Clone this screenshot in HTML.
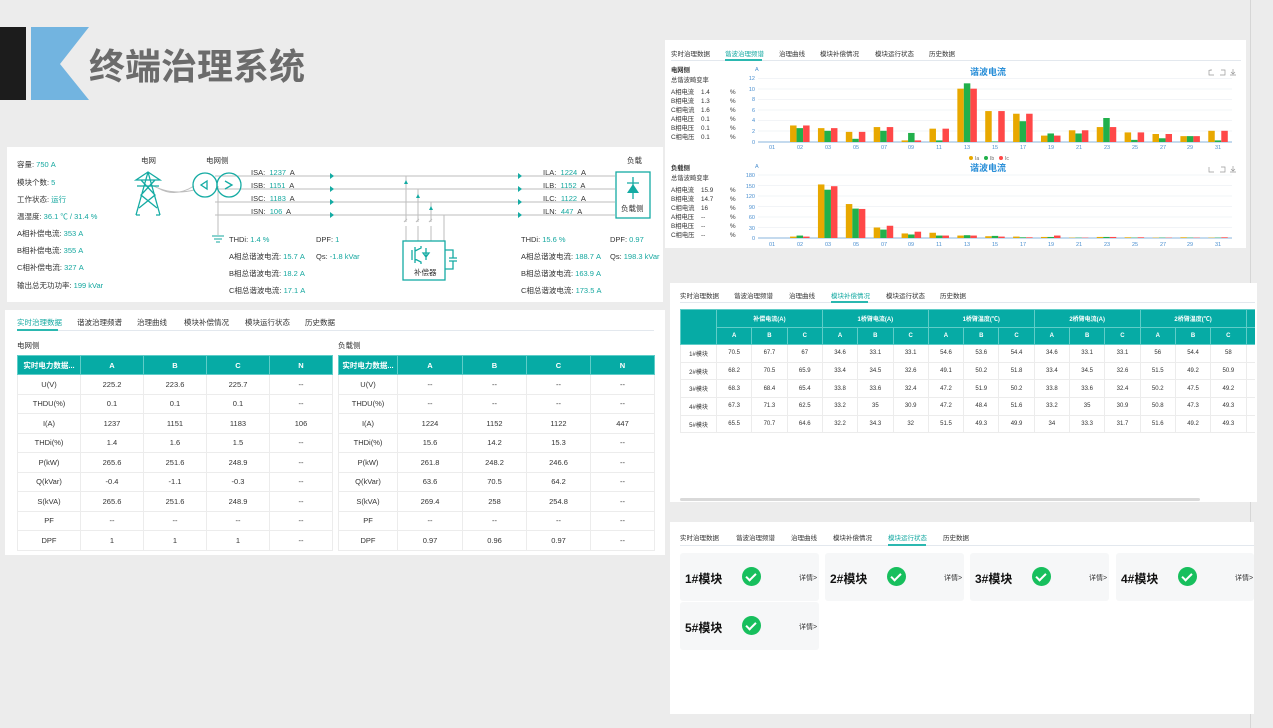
<!DOCTYPE html>
<html><head><meta charset="utf-8">
<style>
*{margin:0;padding:0;box-sizing:border-box}
body{width:1273px;height:728px;background:#ececec;position:relative;overflow:hidden;font-family:"Liberation Sans","Noto Sans CJK SC",sans-serif;color:#333}
.a{position:absolute}
.p{position:absolute;background:#fff}
.t{position:absolute;font-size:7.5px;white-space:nowrap;line-height:1}
.v{color:#14a79f}
.tab{position:absolute;font-size:7.5px;white-space:nowrap;color:#333}
.tab.on{color:#14a9a2}
table{border-collapse:collapse;position:absolute;table-layout:fixed;font-size:7.5px}
td,th{text-align:center;border:1px solid #ececec;overflow:hidden;white-space:nowrap;color:#333;font-weight:normal}
th{background:#06aba5;color:#fff;font-weight:bold;border-color:#5fcdc8}
.card{position:absolute;background:#f6f7f8;border-radius:3px;width:139px;height:48px}
.card b{position:absolute;left:5px;top:17px;font-size:12px;color:#111;font-family:"Liberation Sans","Noto Sans CJK SC",sans-serif}
.card i{position:absolute;left:62px;top:14px;width:19px;height:19px;border-radius:50%;background:#17bf5d}
.card i:after{content:"";position:absolute;left:6px;top:4px;width:4px;height:8px;border:solid #fff;border-width:0 2px 2px 0;transform:rotate(45deg)}
.card span{position:absolute;left:119px;top:20px;font-size:7px;color:#333}
</style></head><body>
<div class="a" style="left:1250px;top:0;width:23px;height:728px;background:#ececec;border-left:1px solid #d6d6d6"></div>
<!-- title -->
<div class="a" style="left:0;top:27px;width:26px;height:73px;background:#1c1c1c"></div>
<svg class="a" style="left:31px;top:27px" width="58" height="73"><polygon points="0,0 58,0 29,37 58,73 0,73" fill="#72b4e0"/></svg>
<div class="a" style="left:89px;top:42px;font-size:36px;font-weight:bold;color:#6b6b6b;letter-spacing:0px;font-family:'Noto Sans CJK SC',sans-serif;line-height:44px">终端治理系统</div>

<!-- panel 1 diagram -->
<div class="p" style="left:7px;top:147px;width:656px;height:155px"></div>
<div class="t" style="left:17px;top:161px">容量: <span class="v">750 A</span></div>
<div class="t" style="left:17px;top:179px">模块个数: <span class="v">5</span></div>
<div class="t" style="left:17px;top:196px">工作状态: <span class="v">运行</span></div>
<div class="t" style="left:17px;top:213px">温湿度: <span class="v">36.1 ℃ / 31.4 %</span></div>
<div class="t" style="left:17px;top:230px">A相补偿电流: <span class="v">353 A</span></div>
<div class="t" style="left:17px;top:247px">B相补偿电流: <span class="v">355 A</span></div>
<div class="t" style="left:17px;top:264px">C相补偿电流: <span class="v">327 A</span></div>
<div class="t" style="left:17px;top:282px">输出总无功功率: <span class="v">199 kVar</span></div>

<div class="t" style="left:141px;top:157px">电网</div>
<div class="t" style="left:206px;top:157px">电网侧</div>
<div class="t" style="left:627px;top:157px">负载</div>
<div class="t" style="left:251px;top:169px">ISA: <span class="v">&nbsp;1237</span>&nbsp; A</div>
<div class="t" style="left:251px;top:182px">ISB: <span class="v">&nbsp;1151</span>&nbsp; A</div>
<div class="t" style="left:251px;top:195px">ISC: <span class="v">&nbsp;1183</span>&nbsp; A</div>
<div class="t" style="left:251px;top:208px">ISN: <span class="v">&nbsp;106</span>&nbsp; A</div>
<div class="t" style="left:543px;top:169px">ILA: <span class="v">&nbsp;1224</span>&nbsp; A</div>
<div class="t" style="left:543px;top:182px">ILB: <span class="v">&nbsp;1152</span>&nbsp; A</div>
<div class="t" style="left:543px;top:195px">ILC: <span class="v">&nbsp;1122</span>&nbsp; A</div>
<div class="t" style="left:543px;top:208px">ILN: <span class="v">&nbsp;447</span>&nbsp; A</div>
<div class="t" style="left:229px;top:236px">THDi: <span class="v">1.4 %</span></div>
<div class="t" style="left:316px;top:236px">DPF: <span class="v">1</span></div>
<div class="t" style="left:229px;top:253px">A相总谐波电流: <span class="v">15.7 A</span></div>
<div class="t" style="left:316px;top:253px">Qs: <span class="v">-1.8 kVar</span></div>
<div class="t" style="left:229px;top:270px">B相总谐波电流: <span class="v">18.2 A</span></div>
<div class="t" style="left:229px;top:287px">C相总谐波电流: <span class="v">17.1 A</span></div>
<div class="t" style="left:521px;top:236px">THDi: <span class="v">15.6 %</span></div>
<div class="t" style="left:610px;top:236px">DPF: <span class="v">0.97</span></div>
<div class="t" style="left:521px;top:253px">A相总谐波电流: <span class="v">188.7 A</span></div>
<div class="t" style="left:610px;top:253px">Qs: <span class="v">198.3 kVar</span></div>
<div class="t" style="left:521px;top:270px">B相总谐波电流: <span class="v">163.9 A</span></div>
<div class="t" style="left:521px;top:287px">C相总谐波电流: <span class="v">173.5 A</span></div>
<div class="t" style="left:414px;top:269px">补偿器</div>
<div class="t" style="left:621px;top:205px">负载侧</div>

<svg class="a" style="left:0;top:0" width="1273" height="728">
<g fill="none" stroke="#bdbdbd" stroke-width="1">
<path d="M215 176H615M215 189H615M215 202H615M215 215H615M218 186V235"/>
<path d="M158 188Q175 198 194 186M150 184Q170 196 194 190"/>
<path d="M406 176V222M418 189V222M431 202V222M444 215V241M406 226V241M418 226V241M431 226V241"/>
<path d="M404 222l3-3M416 222l3-3M429 222l3-3"/>
</g>
<g stroke="#bbb"><path d="M212 236h12M214 239h8M216 242h4" stroke="#14a79f"/></g>
<g fill="none" stroke="#14aba3" stroke-width="1.3">
<path d="M148 172L136 180H160ZM137 186H159M148 172L136 215M148 172L160 215M141 180L155 195L139 208M155 180L141 195L157 208M136 215H140M156 215H160"/>
<circle cx="205" cy="185" r="12"/><circle cx="229" cy="185" r="12"/>
<path d="M207 181L201 185L207 189ZM225 181L232 185L225 189"/>
<rect x="403" y="241" width="42" height="39"/>
<path d="M445 250h8v8M449 258h8M449 261h8M453 261v8h-8"/>
<path d="M412 250v10M415 247v16M415 251l6-3v-2M415 259l6 3v2M426 248v12M423 253h6l-3 4z"/>
<rect x="616" y="172" width="34" height="46"/>
<path d="M633 177v22M627 183h12"/>
</g>
<path d="M627 193h12l-6-9z" fill="#14aba3"/>
<g fill="#14aba3">
<path d="M330 173l4 3-4 3zM330 186l4 3-4 3zM330 199l4 3-4 3zM330 212l4 3-4 3zM518 173l4 3-4 3zM518 186l4 3-4 3zM518 199l4 3-4 3zM518 212l4 3-4 3z"/>
<path d="M404 184l2-4 2 4zM416 198l2-4 2 4zM429 210l2-4 2 4z"/>
</g>
</svg>

<!-- panel 2 -->
<div class="p" style="left:5px;top:310px;width:660px;height:245px"></div>
<div class="tab on" style="left:17px;top:317px">实时治理数据</div>
<div class="tab" style="left:77px;top:317px">谐波治理频谱</div>
<div class="tab" style="left:137px;top:317px">治理曲线</div>
<div class="tab" style="left:184px;top:317px">模块补偿情况</div>
<div class="tab" style="left:245px;top:317px">模块运行状态</div>
<div class="tab" style="left:305px;top:317px">历史数据</div>
<div class="a" style="left:17px;top:330px;width:637px;height:1px;background:#e3e8ee"></div>
<div class="a" style="left:17px;top:329px;width:41px;height:2px;background:#2bb8b0"></div>
<div class="t" style="left:17px;top:342px">电网侧</div>
<div class="t" style="left:338px;top:342px">负载侧</div>
<table style="left:17px;top:355px;width:315px">
<colgroup><col style="width:63px"><col style="width:63px"><col style="width:63px"><col style="width:63px"><col style="width:63px"></colgroup>
<tr style="height:19px"><th>实时电力数据...</th><th>A</th><th>B</th><th>C</th><th>N</th></tr>
<tr style="height:19.5px"><td>U(V)</td><td>225.2</td><td>223.6</td><td>225.7</td><td>--</td></tr>
<tr style="height:19.5px"><td>THDU(%)</td><td>0.1</td><td>0.1</td><td>0.1</td><td>--</td></tr>
<tr style="height:19.5px"><td>I(A)</td><td>1237</td><td>1151</td><td>1183</td><td>106</td></tr>
<tr style="height:19.5px"><td>THDi(%)</td><td>1.4</td><td>1.6</td><td>1.5</td><td>--</td></tr>
<tr style="height:19.5px"><td>P(kW)</td><td>265.6</td><td>251.6</td><td>248.9</td><td>--</td></tr>
<tr style="height:19.5px"><td>Q(kVar)</td><td>-0.4</td><td>-1.1</td><td>-0.3</td><td>--</td></tr>
<tr style="height:19.5px"><td>S(kVA)</td><td>265.6</td><td>251.6</td><td>248.9</td><td>--</td></tr>
<tr style="height:19.5px"><td>PF</td><td>--</td><td>--</td><td>--</td><td>--</td></tr>
<tr style="height:19.5px"><td>DPF</td><td>1</td><td>1</td><td>1</td><td>--</td></tr>
</table>
<table style="left:338px;top:355px;width:316px">
<colgroup><col style="width:59px"><col style="width:65px"><col style="width:64px"><col style="width:64px"><col style="width:64px"></colgroup>
<tr style="height:19px"><th>实时电力数据...</th><th>A</th><th>B</th><th>C</th><th>N</th></tr>
<tr style="height:19.5px"><td>U(V)</td><td>--</td><td>--</td><td>--</td><td>--</td></tr>
<tr style="height:19.5px"><td>THDU(%)</td><td>--</td><td>--</td><td>--</td><td>--</td></tr>
<tr style="height:19.5px"><td>I(A)</td><td>1224</td><td>1152</td><td>1122</td><td>447</td></tr>
<tr style="height:19.5px"><td>THDi(%)</td><td>15.6</td><td>14.2</td><td>15.3</td><td>--</td></tr>
<tr style="height:19.5px"><td>P(kW)</td><td>261.8</td><td>248.2</td><td>246.6</td><td>--</td></tr>
<tr style="height:19.5px"><td>Q(kVar)</td><td>63.6</td><td>70.5</td><td>64.2</td><td>--</td></tr>
<tr style="height:19.5px"><td>S(kVA)</td><td>269.4</td><td>258</td><td>254.8</td><td>--</td></tr>
<tr style="height:19.5px"><td>PF</td><td>--</td><td>--</td><td>--</td><td>--</td></tr>
<tr style="height:19.5px"><td>DPF</td><td>0.97</td><td>0.96</td><td>0.97</td><td>--</td></tr>
</table>

<!-- right panel 1 -->
<div class="p" style="left:665px;top:40px;width:581px;height:208px"></div>
<div class="tab" style="left:671px;top:48px;font-size:6.5px">实时治理数据</div>
<div class="tab on" style="left:725px;top:48px;font-size:6.5px">谐波治理频谱</div>
<div class="tab" style="left:779px;top:48px;font-size:6.5px">治理曲线</div>
<div class="tab" style="left:820px;top:48px;font-size:6.5px">模块补偿情况</div>
<div class="tab" style="left:875px;top:48px;font-size:6.5px">模块运行状态</div>
<div class="tab" style="left:929px;top:48px;font-size:6.5px">历史数据</div>
<div class="a" style="left:671px;top:60px;width:570px;height:1px;background:#e3e8ee"></div>
<div class="a" style="left:725px;top:59px;width:37px;height:2px;background:#2bb8b0"></div>

<div style="position:absolute;left:671px;top:66px;font-size:6.3px;line-height:9px;white-space:pre"><b>电网侧</b>
<span style="line-height:12px">总谐波畸变率</span></div>
<div style="position:absolute;left:671px;top:88px;font-size:6.3px;line-height:9px">A相电流<br>B相电流<br>C相电流<br>A相电压<br>B相电压<br>C相电压</div>
<div style="position:absolute;left:701px;top:88px;font-size:6.3px;line-height:9px">1.4<br>1.3<br>1.6<br>0.1<br>0.1<br>0.1</div>
<div style="position:absolute;left:730px;top:88px;font-size:6.3px;line-height:9px">%<br>%<br>%<br>%<br>%<br>%</div>
<div style="position:absolute;left:671px;top:164px;font-size:6.3px;line-height:9px;white-space:pre"><b>负载侧</b>
<span style="line-height:12px">总谐波畸变率</span></div>
<div style="position:absolute;left:671px;top:186px;font-size:6.3px;line-height:9px">A相电流<br>B相电流<br>C相电流<br>A相电压<br>B相电压<br>C相电压</div>
<div style="position:absolute;left:701px;top:186px;font-size:6.3px;line-height:9px">15.9<br>14.7<br>16<br>--<br>--<br>--</div>
<div style="position:absolute;left:730px;top:186px;font-size:6.3px;line-height:9px">%<br>%<br>%<br>%<br>%<br>%</div>

<svg class="a" style="left:0;top:0" width="1273" height="728" font-family="Liberation Sans, Noto Sans CJK SC, sans-serif">
<g stroke="#eef1f5" stroke-width="0.8">
<path d="M758 78.5H1232M758 89H1232M758 99.5H1232M758 110H1232M758 120.5H1232M758 131H1232"/>
<path d="M758 175H1232M758 185.5H1232M758 196H1232M758 206.5H1232M758 217H1232M758 227.5H1232"/>
</g>
<path d="M758 142H1232M758 238H1232" stroke="#8ab6dc" stroke-width="1"/>
<g font-size="5.5" fill="#4a8fd0" text-anchor="end">
<text x="755" y="80">12</text><text x="755" y="91">10</text><text x="755" y="101">8</text><text x="755" y="112">6</text><text x="755" y="122">4</text><text x="755" y="133">2</text><text x="755" y="144">0</text>
<text x="755" y="177">180</text><text x="755" y="188">150</text><text x="755" y="198">120</text><text x="755" y="209">90</text><text x="755" y="219">60</text><text x="755" y="230">30</text><text x="755" y="240">0</text>
</g>
<g font-size="5.5" fill="#4a8fd0"><text x="755" y="71">A</text><text x="755" y="168">A</text></g>
<g font-size="9" font-weight="bold" fill="#2a8fd8" text-anchor="middle"><text x="988" y="75">谐波电流</text><text x="988" y="171">谐波电流</text></g>
<g font-size="5.5" fill="#4a8fd0" text-anchor="middle">
<text x="772" y="149">01</text><text x="800" y="149">02</text><text x="828" y="149">03</text><text x="856" y="149">05</text><text x="884" y="149">07</text><text x="911" y="149">09</text><text x="939" y="149">11</text><text x="967" y="149">13</text><text x="995" y="149">15</text><text x="1023" y="149">17</text><text x="1051" y="149">19</text><text x="1079" y="149">21</text><text x="1107" y="149">23</text><text x="1135" y="149">25</text><text x="1163" y="149">27</text><text x="1190" y="149">29</text><text x="1218" y="149">31</text>
<text x="772" y="246">01</text><text x="800" y="246">02</text><text x="828" y="246">03</text><text x="856" y="246">05</text><text x="884" y="246">07</text><text x="911" y="246">09</text><text x="939" y="246">11</text><text x="967" y="246">13</text><text x="995" y="246">15</text><text x="1023" y="246">17</text><text x="1051" y="246">19</text><text x="1079" y="246">21</text><text x="1107" y="246">23</text><text x="1135" y="246">25</text><text x="1163" y="246">27</text><text x="1190" y="246">29</text><text x="1218" y="246">31</text>
</g>
<g stroke="#999" stroke-width="0.7" fill="none"><path d="M1209 70v5h5M1212 70h-2v1M1221 70h4v5h-5M1233 69v5M1231 72l2 2 2-2M1230 75h6"/><path d="M1209 167v5h5M1221 167h4v5h-5M1233 166v5M1231 169l2 2 2-2M1230 172h6"/></g>
<g font-size="5" fill="#666"><circle cx="971" cy="158" r="2" fill="#e8a800"/><text x="975" y="160">Ia</text><circle cx="986" cy="158" r="2" fill="#21b04b"/><text x="990" y="160">Ib</text><circle cx="1001" cy="158" r="2" fill="#ff4848"/><text x="1005" y="160">Ic</text></g>
<g transform="translate(758,142) scale(27.88,-5.333)">
<g fill="#e8a800"><rect x="1.15" width=".233" height="3.1"/><rect x="2.15" width=".233" height="2.6"/><rect x="3.15" width=".233" height="1.9"/><rect x="4.15" width=".233" height="2.8"/><rect x="5.15" width=".233" height="0.3"/><rect x="6.15" width=".233" height="2.5"/><rect x="7.15" width=".233" height="10"/><rect x="8.15" width=".233" height="5.8"/><rect x="9.15" width=".233" height="5.3"/><rect x="10.15" width=".233" height="1.2"/><rect x="11.15" width=".233" height="2.2"/><rect x="12.15" width=".233" height="2.8"/><rect x="13.15" width=".233" height="1.8"/><rect x="14.15" width=".233" height="1.5"/><rect x="15.15" width=".233" height="1.1"/><rect x="16.15" width=".233" height="2.1"/></g>
<g fill="#21b04b"><rect x="1.383" width=".233" height="2.6"/><rect x="2.383" width=".233" height="2.1"/><rect x="3.383" width=".233" height="0.6"/><rect x="4.383" width=".233" height="2.1"/><rect x="5.383" width=".233" height="1.7"/><rect x="6.383" width=".233" height="0.3"/><rect x="7.383" width=".233" height="11"/><rect x="8.383" width=".233" height="0.1"/><rect x="9.383" width=".233" height="3.9"/><rect x="10.383" width=".233" height="1.6"/><rect x="11.383" width=".233" height="1.6"/><rect x="12.383" width=".233" height="4.5"/><rect x="13.383" width=".233" height="0.4"/><rect x="14.383" width=".233" height="0.7"/><rect x="15.383" width=".233" height="1.1"/><rect x="16.383" width=".233" height="0.3"/></g>
<g fill="#ff4848"><rect x="1.617" width=".233" height="3.1"/><rect x="2.617" width=".233" height="2.6"/><rect x="3.617" width=".233" height="1.9"/><rect x="4.617" width=".233" height="2.8"/><rect x="5.617" width=".233" height="0.3"/><rect x="6.617" width=".233" height="2.5"/><rect x="7.617" width=".233" height="10"/><rect x="8.617" width=".233" height="5.8"/><rect x="9.617" width=".233" height="5.3"/><rect x="10.617" width=".233" height="1.2"/><rect x="11.617" width=".233" height="2.2"/><rect x="12.617" width=".233" height="2.8"/><rect x="13.617" width=".233" height="1.8"/><rect x="14.617" width=".233" height="1.5"/><rect x="15.617" width=".233" height="1.1"/><rect x="16.617" width=".233" height="2.1"/></g>
</g>
<g transform="translate(758,238) scale(27.88,-0.35)">
<g fill="#e8a800"><rect x="1.15" width=".233" height="4"/><rect x="2.15" width=".233" height="153"/><rect x="3.15" width=".233" height="97"/><rect x="4.15" width=".233" height="30"/><rect x="5.15" width=".233" height="13"/><rect x="6.15" width=".233" height="15"/><rect x="7.15" width=".233" height="7"/><rect x="8.15" width=".233" height="5"/><rect x="9.15" width=".233" height="4"/><rect x="10.15" width=".233" height="3"/><rect x="11.15" width=".233" height="1"/><rect x="12.15" width=".233" height="3"/><rect x="13.15" width=".233" height="2"/><rect x="14.15" width=".233" height="1"/><rect x="15.15" width=".233" height="2"/><rect x="16.15" width=".233" height="1"/></g>
<g fill="#21b04b"><rect x="1.383" width=".233" height="7"/><rect x="2.383" width=".233" height="138"/><rect x="3.383" width=".233" height="84"/><rect x="4.383" width=".233" height="24"/><rect x="5.383" width=".233" height="10"/><rect x="6.383" width=".233" height="7"/><rect x="7.383" width=".233" height="8"/><rect x="8.383" width=".233" height="6"/><rect x="9.383" width=".233" height="2"/><rect x="10.383" width=".233" height="3"/><rect x="11.383" width=".233" height="1"/><rect x="12.383" width=".233" height="3"/><rect x="13.383" width=".233" height="1"/><rect x="14.383" width=".233" height="1"/><rect x="15.383" width=".233" height="1"/><rect x="16.383" width=".233" height="1"/></g>
<g fill="#ff4848"><rect x="1.617" width=".233" height="4"/><rect x="2.617" width=".233" height="148"/><rect x="3.617" width=".233" height="83"/><rect x="4.617" width=".233" height="35"/><rect x="5.617" width=".233" height="18"/><rect x="6.617" width=".233" height="7"/><rect x="7.617" width=".233" height="7"/><rect x="8.617" width=".233" height="4"/><rect x="9.617" width=".233" height="2"/><rect x="10.617" width=".233" height="7"/><rect x="11.617" width=".233" height="1"/><rect x="12.617" width=".233" height="3"/><rect x="13.617" width=".233" height="2"/><rect x="14.617" width=".233" height="1"/><rect x="15.617" width=".233" height="1"/><rect x="16.617" width=".233" height="2"/></g>
</g>
</svg>

<!-- right panel 2 -->
<div class="p" style="left:670px;top:283px;width:587px;height:219px"></div>
<div class="tab" style="left:680px;top:290px;font-size:6.5px">实时治理数据</div>
<div class="tab" style="left:734px;top:290px;font-size:6.5px">谐波治理频谱</div>
<div class="tab" style="left:789px;top:290px;font-size:6.5px">治理曲线</div>
<div class="tab on" style="left:831px;top:290px;font-size:6.5px">模块补偿情况</div>
<div class="tab" style="left:886px;top:290px;font-size:6.5px">模块运行状态</div>
<div class="tab" style="left:940px;top:290px;font-size:6.5px">历史数据</div>
<div class="a" style="left:680px;top:302px;width:575px;height:1px;background:#e3e8ee"></div>
<div class="a" style="left:831px;top:301px;width:37px;height:2px;background:#2bb8b0"></div>
<div class="a" style="left:680px;top:309px;width:575px;height:190px;overflow:hidden">
<table style="left:0;top:0;width:576px;font-size:6px">
<colgroup><col style="width:36px"><col span="15" style="width:35.3px"><col style="width:10.5px"></colgroup>
<tr style="height:17.5px"><th rowspan="2"></th><th colspan="3">补偿电流(A)</th><th colspan="3">1桥臂电流(A)</th><th colspan="3">1桥臂温度(℃)</th><th colspan="3">2桥臂电流(A)</th><th colspan="3">2桥臂温度(℃)</th><th></th></tr>
<tr style="height:17.5px"><th>A</th><th>B</th><th>C</th><th>A</th><th>B</th><th>C</th><th>A</th><th>B</th><th>C</th><th>A</th><th>B</th><th>C</th><th>A</th><th>B</th><th>C</th><th></th></tr>
<tr style="height:17.7px"><td>1#模块</td><td>70.5</td><td>67.7</td><td>67</td><td>34.6</td><td>33.1</td><td>33.1</td><td>54.6</td><td>53.6</td><td>54.4</td><td>34.6</td><td>33.1</td><td>33.1</td><td>56</td><td>54.4</td><td>58</td><td></td></tr>
<tr style="height:17.7px"><td>2#模块</td><td>68.2</td><td>70.5</td><td>65.9</td><td>33.4</td><td>34.5</td><td>32.6</td><td>49.1</td><td>50.2</td><td>51.8</td><td>33.4</td><td>34.5</td><td>32.6</td><td>51.5</td><td>49.2</td><td>50.9</td><td></td></tr>
<tr style="height:17.7px"><td>3#模块</td><td>68.3</td><td>68.4</td><td>65.4</td><td>33.8</td><td>33.6</td><td>32.4</td><td>47.2</td><td>51.9</td><td>50.2</td><td>33.8</td><td>33.6</td><td>32.4</td><td>50.2</td><td>47.5</td><td>49.2</td><td></td></tr>
<tr style="height:17.7px"><td>4#模块</td><td>67.3</td><td>71.3</td><td>62.5</td><td>33.2</td><td>35</td><td>30.9</td><td>47.2</td><td>48.4</td><td>51.6</td><td>33.2</td><td>35</td><td>30.9</td><td>50.8</td><td>47.3</td><td>49.3</td><td></td></tr>
<tr style="height:17.7px"><td>5#模块</td><td>65.5</td><td>70.7</td><td>64.6</td><td>32.2</td><td>34.3</td><td>32</td><td>51.5</td><td>49.3</td><td>49.9</td><td>34</td><td>33.3</td><td>31.7</td><td>51.6</td><td>49.2</td><td>49.3</td><td></td></tr>
</table></div>
<div class="a" style="left:680px;top:498px;width:520px;height:3px;background:#d9d9d9;border-radius:2px"></div>

<!-- right panel 3 -->
<div class="p" style="left:670px;top:522px;width:584px;height:192px"></div>
<div class="tab" style="left:680px;top:532px;font-size:6.5px">实时治理数据</div>
<div class="tab" style="left:736px;top:532px;font-size:6.5px">谐波治理频谱</div>
<div class="tab" style="left:791px;top:532px;font-size:6.5px">治理曲线</div>
<div class="tab" style="left:833px;top:532px;font-size:6.5px">模块补偿情况</div>
<div class="tab on" style="left:888px;top:532px;font-size:6.5px">模块运行状态</div>
<div class="tab" style="left:943px;top:532px;font-size:6.5px">历史数据</div>
<div class="a" style="left:680px;top:545px;width:574px;height:1px;background:#e3e8ee"></div>
<div class="a" style="left:888px;top:544px;width:38px;height:2px;background:#2bb8b0"></div>
<div class="card" style="left:680px;top:553px"><b>1#模块</b><i></i><span>详情&gt;</span></div>
<div class="card" style="left:825px;top:553px"><b>2#模块</b><i></i><span>详情&gt;</span></div>
<div class="card" style="left:970px;top:553px"><b>3#模块</b><i></i><span>详情&gt;</span></div>
<div class="card" style="left:1116px;top:553px;width:138px"><b>4#模块</b><i></i><span>详情&gt;</span></div>
<div class="card" style="left:680px;top:602px"><b>5#模块</b><i></i><span>详情&gt;</span></div>
</body></html>
